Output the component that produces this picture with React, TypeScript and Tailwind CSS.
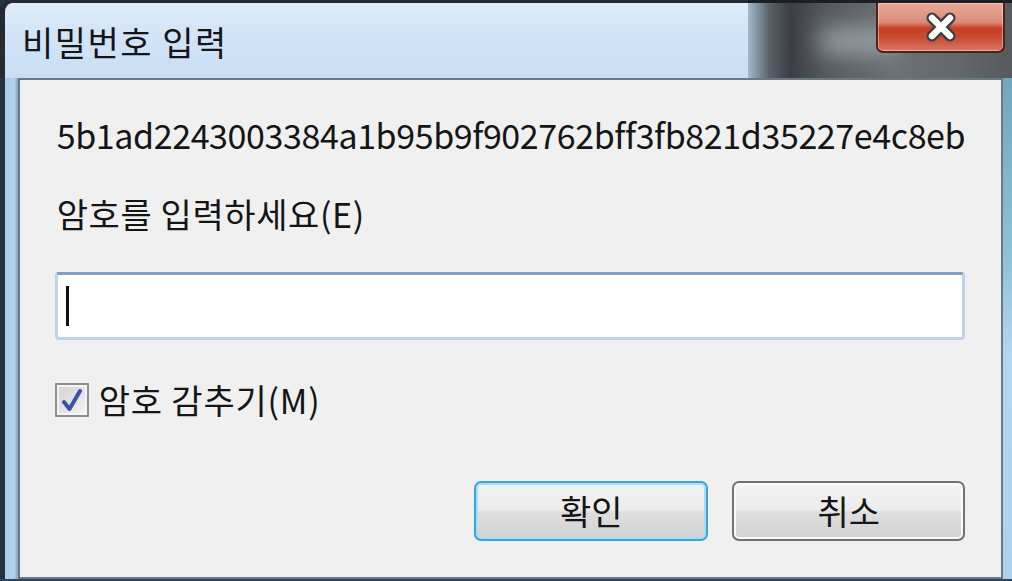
import React from "react";

function CloseX() {
  return (
    <svg width="34" height="30" viewBox="0 0 34 30">
      <g strokeLinecap="round">
        <path d="M8 6 L26 24 M26 6 L8 24" stroke="#3b3f46" strokeWidth="11" />
        <path d="M8 6 L26 24 M26 6 L8 24" stroke="#ffffff" strokeWidth="6.5" />
      </g>
    </svg>
  );
}

function Check() {
  return (
    <svg width="20" height="24" viewBox="0 0 20 24">
      <path
        d="M2 14 L7.5 21 L18 3"
        fill="none"
        stroke="#3a52a6"
        strokeWidth="4"
        strokeLinecap="round"
        strokeLinejoin="round"
      />
    </svg>
  );
}

export default function App() {
  return (
    <div className="w-[1012px] h-[581px] overflow-hidden flex flex-col bg-[#22303f] font-['Noto_Sans_CJK_KR','Noto_Sans',sans-serif] text-[34px] leading-[32px] text-[#151515]">
      {/* Title bar */}
      <div className="h-[78px] flex shrink-0">
        <div className="w-[748px] border-t-[3px] border-l-[5px] border-[#262b31] rounded-tl-[12px] bg-[linear-gradient(180deg,#e1edf9_0%,#d3e5f7_35%,#c9def4_100%)] pt-[23px] pl-[17px]">
          <div className="h-[32px] tracking-[1.5px] whitespace-nowrap">비밀번호 입력</div>
        </div>
        <div className="flex-1 relative border-t-[3px] border-[#1c1f23] bg-[linear-gradient(90deg,#a3b9cc_0%,#5b6168_8%,#3b3f44_16%,#555a60_30%,#6c7176_55%,#63686d_80%,#56595d_100%)] flex justify-end items-start pr-[7px]">
          <div className="absolute left-[70px] top-[28px] w-[80px] h-[20px] rounded-full bg-[#a7afb5] blur-md"></div>
          <div className="relative w-[129px] h-[50px] rounded-b-[7px] border-[2px] border-t-0 border-[#4c2219] bg-[linear-gradient(180deg,#e9a999_0%,#dc8d7c_40%,#c63e22_53%,#c94a30_72%,#d8786a_100%)] shadow-[inset_0_0_0_1px_rgba(255,220,210,0.5)] flex items-center justify-center">
            <CloseX />
          </div>
        </div>
      </div>

      {/* Body */}
      <div className="flex-1 flex">
        <div className="w-[18px] border-l-[5px] border-[#26313d] bg-[linear-gradient(90deg,#a6cbee_0%,#b1d3f2_70%,#8aa3ba_100%)]"></div>
        <div className="flex-1 bg-[#f0f0f0] border-[2px] border-[#6c7883] flex flex-col pt-[39px] pl-[35px] pr-[36px]">
          <div className="h-[32px] pl-[2px] whitespace-nowrap tracking-[-0.4px]">
            5b1ad2243003384a1b95b9f902762bff3fb821d35227e4c8eb
          </div>
          <div className="mt-[47px] h-[32px] pl-[2px] whitespace-nowrap tracking-[0.6px]">
            암호를 입력하세요(E)
          </div>
          <div className="mt-[42px] h-[68px] rounded-[4px] bg-white border-[3px] border-[#bcd3ea] border-t-[#7f9fc6] flex items-center pl-[8px]">
            <div className="w-[3px] h-[40px] bg-[#111]"></div>
          </div>
          <div className="mt-[43px] h-[34px] flex items-center gap-[10px]">
            <div className="w-[34px] h-[34px] border-[2px] border-[#8f8f8f] bg-[linear-gradient(135deg,#d2d2d2_0%,#e3e3e3_50%,#f5f5f5_100%)] shadow-[inset_0_0_0_2px_#f4f4f4] flex items-center justify-center">
              <Check />
            </div>
            <div className="h-[32px] whitespace-nowrap tracking-[0.8px]">암호 감추기(M)</div>
          </div>
          <div className="mt-[64px] flex justify-end gap-[24px]">
            <div className="w-[234px] h-[60px] rounded-[7px] border-[2px] border-[#3ca4dc] shadow-[inset_0_0_0_2px_#a9def5] bg-[linear-gradient(180deg,#f3f3f3_0%,#ececec_48%,#dedede_52%,#d2d2d2_100%)] flex items-center justify-center">
              확인
            </div>
            <div className="w-[233px] h-[60px] rounded-[7px] border-[2px] border-[#717171] shadow-[inset_0_0_0_2px_#fbfbfb] bg-[linear-gradient(180deg,#f3f3f3_0%,#ececec_48%,#dedede_52%,#d2d2d2_100%)] flex items-center justify-center">
              취소
            </div>
          </div>
        </div>
        <div className="w-[9px] bg-[linear-gradient(180deg,#6fa8bd_0%,#8cc2d6_35%,#b3d6ef_55%,#aed2ee_100%)]"></div>
      </div>
      <div className="h-[2px] bg-[#2a4561] shrink-0"></div>
    </div>
  );
}
